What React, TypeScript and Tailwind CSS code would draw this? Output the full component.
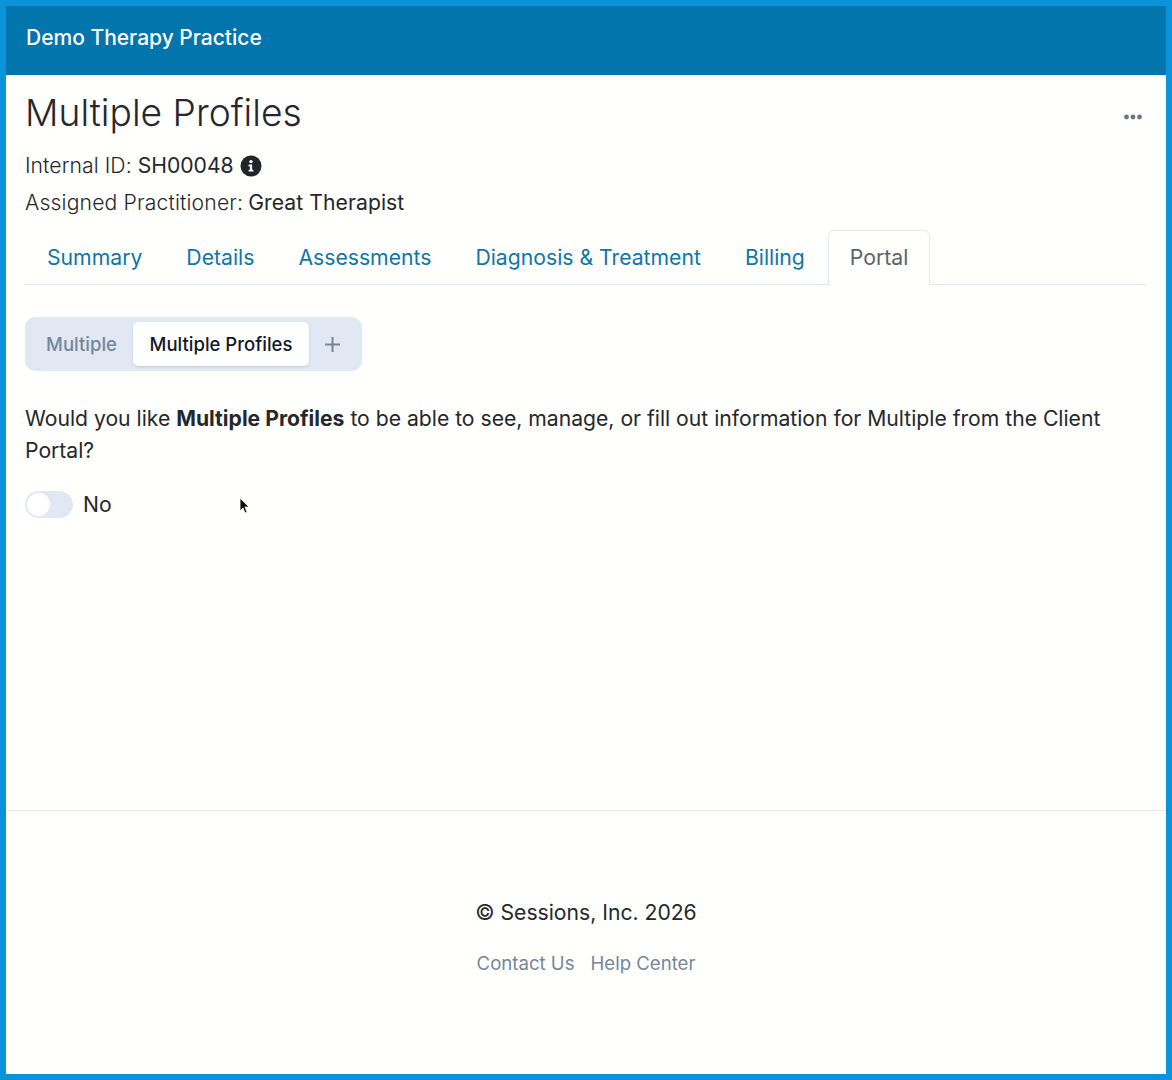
export default function App() {
  const tabs = ["Summary", "Details", "Assessments", "Diagnosis & Treatment", "Billing"];
  return (
    <div className="relative flex h-[1080px] w-[1172px] flex-col border-[6px] border-[#0a93d8] bg-[#fffffe] font-['Inter',sans-serif] text-[21.15px] text-[#24282c]">
      <header className="flex h-[69px] shrink-0 items-center bg-[#0275ad] pb-[6px] pl-5 text-[21px] font-medium text-white">
        Demo Therapy Practice
      </header>
      <main className="flex h-[735px] shrink-0 flex-col px-[19px]">
        <div className="flex items-start justify-between pt-[14px]">
          <h1 className="text-[37.2px] font-light leading-[48px]">Multiple Profiles</h1>
          <svg className="mr-[5px] mt-[25px] h-[6px] w-[18px]" viewBox="0 0 18 6" fill="#6c757d" aria-hidden="true">
            <circle cx="2.5" cy="3" r="2.4" />
            <circle cx="9" cy="3" r="2.4" />
            <circle cx="15.5" cy="3" r="2.4" />
          </svg>
        </div>
        <div className="mt-[14px] flex h-[30px] items-center">
          <span className="font-light tracking-[0.07px]">Internal ID:</span>
          <span className="ml-[6px]">SH00048</span>
          <svg className="ml-[6px] h-[22px] w-[22px]" viewBox="0 0 22 22" aria-hidden="true">
            <circle cx="11" cy="11" r="10.5" fill="#212529" />
            <circle cx="11" cy="6.6" r="1.7" fill="#fff" />
            <path d="M8.6 9.6h3.5v5.2h1.3v1.8H8.6v-1.8h1.3v-3.4H8.6z" fill="#fff" />
          </svg>
        </div>
        <div className="mt-[7px] flex h-[30px] items-center">
          <span className="font-light tracking-[0.16px]">Assigned Practitioner:</span>
          <span className="ml-[5px] tracking-[0.07px]">Great Therapist</span>
        </div>
        <nav className="mt-[12px] flex h-[55px] shrink-0 items-stretch border-b border-[#e2e8f0] text-[21.2px]">
          {tabs.map((t) => (
            <a key={t} className="flex items-center px-[22px] pt-px text-[#0f76a8]">{t}</a>
          ))}
          <a className="relative -mb-px ml-px flex items-center rounded-t-[6px] border border-b-0 border-[#e2e8f0] bg-[#fffffe] px-[21px] text-[#5c636a]">Portal</a>
        </nav>
        <div className="mt-[32px] flex h-[54px] w-[337px] items-center rounded-[10px] bg-[#e2e8f3] px-[5px]">
          <span className="flex w-[103px] justify-center pt-px text-[18.5px] font-medium text-[#76869a]">Multiple</span>
          <span className="flex h-[44px] w-[176px] items-center justify-center rounded-[5px] bg-white pt-px text-[18.5px] font-medium text-[#111827] shadow-sm">Multiple Profiles</span>
          <svg className="ml-[16px] h-[15px] w-[15px]" viewBox="0 0 15 15" fill="none" stroke="#76869a" strokeWidth="2" aria-hidden="true">
            <path d="M7.5 0v15M0 7.5h15" />
          </svg>
        </div>
        <p className="mt-[32px] leading-[32px]">
          Would you like <strong className="font-bold">Multiple Profiles</strong> to be able to see, manage, or fill out information for Multiple from the Client Portal?
        </p>
        <div className="mt-[22px] flex items-center">
          <span className="flex h-[27px] w-[48px] items-center rounded-full bg-[#e2e8f3] pl-[2px]">
            <span className="h-[23px] w-[23px] rounded-full bg-white" />
          </span>
          <span className="ml-[10px]">No</span>
        </div>
      </main>
      <footer className="flex flex-1 flex-col items-center border-t border-[#e2e8f0] pt-[87px]">
        <p className="leading-[30px]">© Sessions, Inc. 2026</p>
        <div className="mt-[22px] flex gap-[16px] text-[18.6px] text-[#76869a]">
          <a>Contact Us</a>
          <a>Help Center</a>
        </div>
      </footer>
      <svg className="absolute left-[233px] top-[491px] h-[18px] w-[12px]" viewBox="0 0 12 18" aria-hidden="true">
        <path d="M1 1v13l3-3 2 5 2-1-2-5h4z" fill="#111" stroke="#fff" strokeWidth="0.8" />
      </svg>
    </div>
  );
}
